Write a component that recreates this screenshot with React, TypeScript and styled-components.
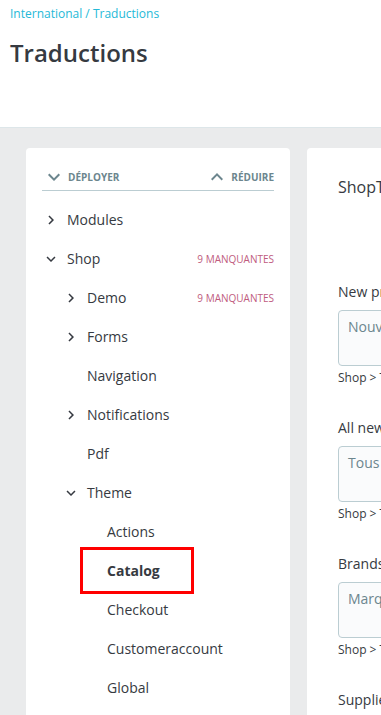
import React from 'react';
import styled, {createGlobalStyle} from 'styled-components';

const GlobalStyle = createGlobalStyle`
  html, body {
    margin: 0;
    padding: 0;
    overflow: hidden;
    background: #eaebec;
  }

  body {
    font-family: 'Open Sans', 'Noto Sans', sans-serif;
    color: #363a41;
  }
`;

const Header = styled.header`
  height: 128px;
  padding: 5px 10px 0;
  box-sizing: border-box;
  background: #fff;
  border-bottom: 1px solid #dde6e9;
`;

const Breadcrumb = styled.div`
  font-size: 12px;
  line-height: 18px;
  color: #25b9d7;
`;

const Title = styled.h1`
  margin: 16px 0 0;
  font-size: 24px;
  font-weight: 600;
  line-height: 28px;
  color: #363a41;
`;

const Main = styled.main`
  display: flex;
  gap: 17px;
  padding: 20px 0 0 26px;
  width: 1100px;
  height: 600px;
`;

const Card = styled.section<{$width: number}>`
  flex: 0 0 ${({$width}) => $width}px;
  background: #fff;
  border-radius: 4px;
  box-sizing: border-box;
`;

const TreeCard = styled(Card)`
  padding: 18px 16px 0;
`;

const Toolbar = styled.div`
  display: flex;
  justify-content: space-between;
  align-items: center;
  height: 22px;
  padding: 0 0 2px;
  border-bottom: 1px solid #bbcdd2;
  margin-bottom: 9px;
`;

const ToolButton = styled.button`
  display: flex;
  align-items: center;
  gap: 2px;
  padding: 0;
  border: 0;
  background: none;
  font-family: inherit;
  font-size: 10px;
  font-weight: 700;
  text-transform: uppercase;
  color: #6c868e;
  cursor: pointer;

  svg {
    fill: #6c868e;
  }
`;

const Row = styled.div<{$level: number}>`
  display: flex;
  align-items: center;
  height: 39px;
  padding-left: ${({$level}) => $level * 20}px;
`;

const Toggle = styled.span`
  display: flex;
  align-items: center;
  justify-content: center;
  width: 18px;
  height: 18px;
  margin-right: 7px;

  svg {
    fill: #363a41;
  }
`;

const Label = styled.span<{$active?: boolean}>`
  font-size: 14px;
  font-weight: ${({$active}) => ($active ? 700 : 400)};
  color: #363a41;
`;

const Highlight = styled.span`
  display: inline-flex;
  align-items: center;
  margin-left: -27px;
  padding: 11px 0 11px 24px;
  width: 84px;
  border: 3px solid #ff0000;
`;

const Missing = styled.span`
  margin-left: auto;
  font-size: 10px;
  text-transform: uppercase;
  color: #c05c7e;
`;

const FormCard = styled(Card)`
  padding: 28px 31px 0;
`;

const DomainTitle = styled.h2`
  margin: 0 0 84px;
  font-size: 16px;
  font-weight: 400;
  line-height: 22px;
  color: #363a41;
`;

const Field = styled.div`
  margin-bottom: 32px;
`;

const FieldLabel = styled.label`
  display: block;
  font-size: 14px;
  line-height: 20px;
  margin-bottom: 8px;
`;

const TextArea = styled.textarea`
  display: block;
  width: 520px;
  height: 56px;
  box-sizing: border-box;
  padding: 6px 9px;
  border: 1px solid #bbcdd2;
  border-radius: 4px;
  background: #fafbfc;
  font-family: inherit;
  font-size: 14px;
  line-height: 20px;
  color: #6c868e;
  resize: none;
`;

const Hint = styled.div`
  margin-top: 4px;
  font-size: 12px;
  line-height: 16px;
  color: #363a41;
`;

const ChevronRight = () => (
  <svg width="18" height="18" viewBox="0 0 24 24">
    <path d="M8.59 16.59L13.17 12 8.59 7.41 10 6l6 6-6 6-1.41-1.41z" />
  </svg>
);

const ChevronDown = ({size = 18}: {size?: number}) => (
  <svg width={size} height={size} viewBox="0 0 24 24">
    <path d="M16.59 8.59L12 13.17 7.41 8.59 6 10l6 6 6-6z" />
  </svg>
);

const ChevronUp = ({size = 18}: {size?: number}) => (
  <svg width={size} height={size} viewBox="0 0 24 24">
    <path d="M7.41 15.41L12 10.83l4.59 4.58L18 14l-6-6-6 6z" />
  </svg>
);

type Node = {
  label: string;
  level: number;
  toggle?: 'open' | 'closed';
  missing?: number;
  active?: boolean;
};

const nodes: Node[] = [
  {label: 'Modules', level: 0, toggle: 'closed'},
  {label: 'Shop', level: 0, toggle: 'open', missing: 9},
  {label: 'Demo', level: 1, toggle: 'closed', missing: 9},
  {label: 'Forms', level: 1, toggle: 'closed'},
  {label: 'Navigation', level: 1},
  {label: 'Notifications', level: 1, toggle: 'closed'},
  {label: 'Pdf', level: 1},
  {label: 'Theme', level: 1, toggle: 'open'},
  {label: 'Actions', level: 2},
  {label: 'Catalog', level: 2, active: true},
  {label: 'Checkout', level: 2},
  {label: 'Customeraccount', level: 2},
  {label: 'Global', level: 2},
];

const fields = [
  {label: 'New products', value: 'Nouveaux produits'},
  {label: 'All new products', value: 'Tous les nouveaux produits'},
  {label: 'Brands', value: 'Marques'},
  {label: 'Suppliers', value: 'Fournisseurs'},
];

export default function App() {
  return (
    <>
      <GlobalStyle />
      <Header>
        <Breadcrumb>International / Traductions</Breadcrumb>
        <Title>Traductions</Title>
      </Header>

      <Main>
        <TreeCard $width={264}>
          <Toolbar>
            <ToolButton>
              <ChevronDown size={24} />
              Déployer
            </ToolButton>
            <ToolButton>
              <ChevronUp size={24} />
              Réduire
            </ToolButton>
          </Toolbar>

          {nodes.map((node) => (
            <Row key={node.label} $level={node.level}>
              <Toggle>
                {node.toggle === 'closed' && <ChevronRight />}
                {node.toggle === 'open' && <ChevronDown />}
              </Toggle>
              {node.active ? (
                <Highlight>
                  <Label $active>{node.label}</Label>
                </Highlight>
              ) : (
                <Label>{node.label}</Label>
              )}
              {node.missing && <Missing>{node.missing} manquantes</Missing>}
            </Row>
          ))}
        </TreeCard>

        <FormCard $width={700}>
          <DomainTitle>ShopThemeCatalog</DomainTitle>
          {fields.map((field) => (
            <Field key={field.label}>
              <FieldLabel>{field.label}</FieldLabel>
              <TextArea defaultValue={field.value} />
              <Hint>Shop &gt; Theme &gt; Catalog</Hint>
            </Field>
          ))}
        </FormCard>
      </Main>
    </>
  );
}
